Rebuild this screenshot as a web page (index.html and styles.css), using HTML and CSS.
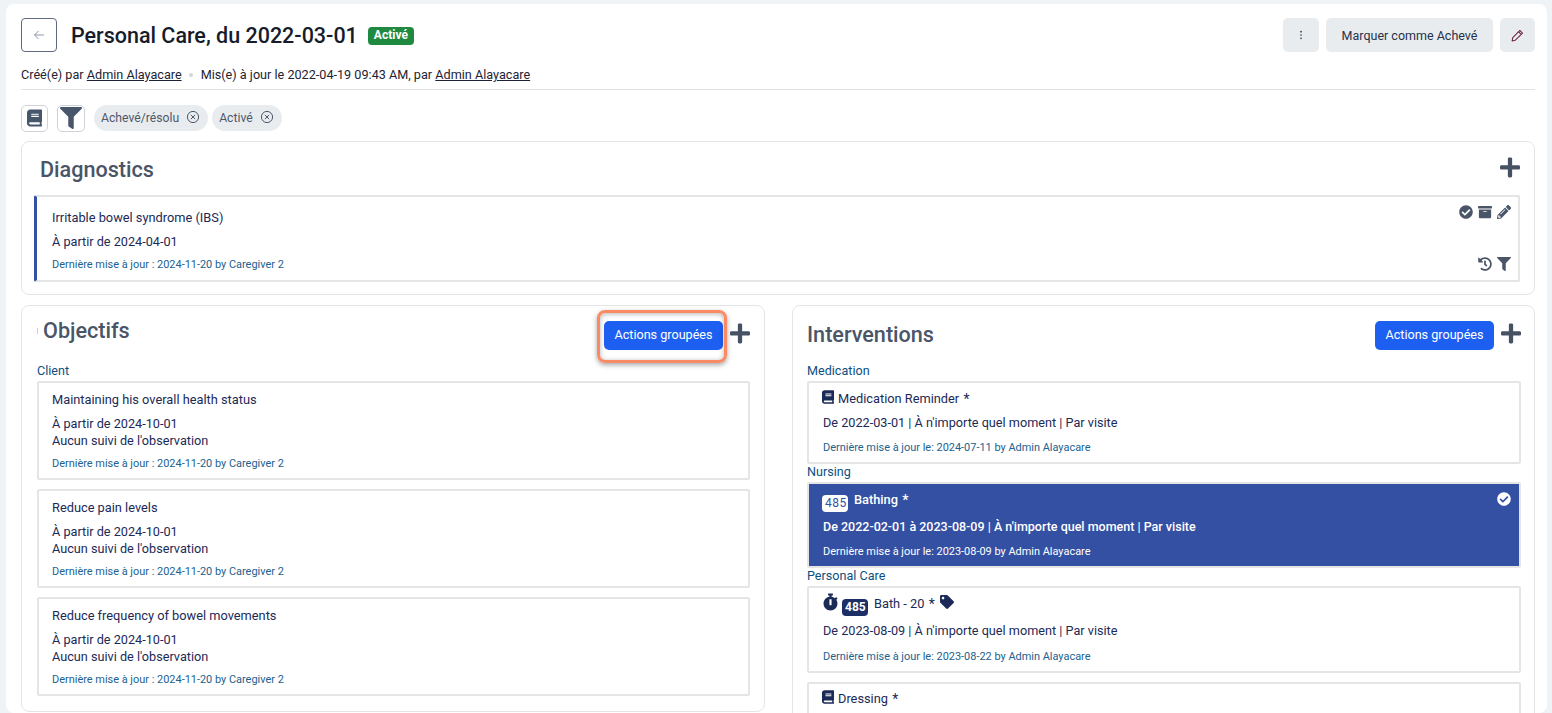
FILE: index.html
```html
<!DOCTYPE html>
<html lang="fr">
<head>
<meta charset="utf-8">
<title>Personal Care</title>
<link rel="stylesheet" href="styles.css">
</head>
<body>
<svg class="sprite" aria-hidden="true">
  <symbol id="i-book" viewBox="0 0 448 512"><path d="M448 360V24c0-13.3-10.7-24-24-24H96C43 0 0 43 0 96v320c0 53 43 96 96 96h328c13.3 0 24-10.7 24-24v-16c0-7.5-3.5-14.3-8.9-18.7-4.2-15.4-4.2-59.3 0-74.7 5.4-4.3 8.9-11.1 8.9-18.6zM128 134c0-3.3 2.7-6 6-6h212c3.3 0 6 2.7 6 6v20c0 3.3-2.7 6-6 6H134c-3.3 0-6-2.7-6-6v-20zm0 64c0-3.3 2.7-6 6-6h212c3.3 0 6 2.7 6 6v20c0 3.3-2.7 6-6 6H134c-3.3 0-6-2.7-6-6v-20zm253.4 250H96c-17.7 0-32-14.3-32-32 0-17.6 14.4-32 32-32h285.4c-1.9 17.1-1.9 46.9 0 64z"/></symbol>
  <symbol id="i-filter" viewBox="0 0 512 512"><path d="M487.976 0H24.028C2.71 0-8.047 25.866 7.058 40.971L192 225.941V432c0 7.831 3.821 15.17 10.237 19.662l80 55.98C298.02 518.69 320 507.493 320 487.98V225.941l184.947-184.97C520.021 25.896 509.338 0 487.976 0z"/></symbol>
  <symbol id="i-check" viewBox="0 0 512 512"><path d="M504 256c0 136.967-111.033 248-248 248S8 392.967 8 256 119.033 8 256 8s248 111.033 248 248zM227.314 387.314l184-184c6.248-6.248 6.248-16.379 0-22.627l-22.627-22.627c-6.248-6.249-16.379-6.249-22.628 0L216 308.118l-70.059-70.059c-6.248-6.248-16.379-6.248-22.628 0l-22.627 22.627c-6.248 6.248-6.248 16.379 0 22.627l104 104c6.249 6.249 16.379 6.249 22.628.001z"/></symbol>
  <symbol id="i-archive" viewBox="0 0 512 512"><path d="M32 448c0 17.7 14.3 32 32 32h384c17.7 0 32-14.3 32-32V160H32v288zm160-212c0-6.6 5.4-12 12-12h104c6.6 0 12 5.4 12 12v8c0 6.6-5.4 12-12 12H204c-6.6 0-12-5.4-12-12v-8zM480 32H32C14.3 32 0 46.3 0 64v48c0 8.8 7.2 16 16 16h480c8.8 0 16-7.2 16-16V64c0-17.7-14.3-32-32-32z"/></symbol>
  <symbol id="i-pencil" viewBox="0 0 512 512"><path d="M497.9 142.1l-46.1 46.1c-4.7 4.7-12.3 4.7-17 0l-111-111c-4.7-4.7-4.7-12.3 0-17l46.1-46.1c18.7-18.7 49.1-18.7 67.9 0l60.1 60.1c18.8 18.7 18.8 49.1 0 67.9zM284.2 99.8L21.6 362.4.4 483.9c-2.9 16.4 11.4 30.6 27.8 27.8l121.5-21.3 262.6-262.6c4.7-4.7 4.7-12.3 0-17l-111-111c-4.8-4.7-12.4-4.7-17.1 0zM124.1 339.9c-5.5-5.5-5.5-14.3 0-19.8l154-154c5.5-5.5 14.3-5.5 19.8 0s5.5 14.3 0 19.8l-154 154c-5.5 5.5-14.3 5.5-19.8 0zM88 424h48v36.3l-64.5 11.3-31.1-31.1L51.7 376H88v48z"/></symbol>
  <symbol id="i-history" viewBox="0 0 512 512"><path d="M504 255.531c.253 136.64-111.18 248.372-247.82 248.468-59.015.042-113.223-20.53-155.822-54.911-11.077-8.94-11.905-25.541-1.839-35.607l11.267-11.267c8.609-8.609 22.353-9.551 31.891-1.984C173.062 425.135 212.781 440 256 440c101.705 0 184-82.311 184-184 0-101.705-82.311-184-184-184-48.814 0-93.149 18.969-126.068 49.932l50.754 50.754c10.08 10.08 2.941 27.314-11.313 27.314H24c-8.837 0-16-7.163-16-16V38.627c0-14.254 17.234-21.393 27.314-11.314l49.372 49.372C129.209 34.136 189.552 8 256 8c136.81 0 247.747 110.78 248 247.531zm-180.912 78.784l9.823-12.63c8.138-10.463 6.253-25.542-4.21-33.679L288 256.349V152c0-13.255-10.745-24-24-24h-16c-13.255 0-24 10.745-24 24v135.651l65.409 50.874c10.463 8.137 25.541 6.253 33.679-4.21z"/></symbol>
  <symbol id="i-plus" viewBox="0 0 448 512"><path d="M416 208H272V64c0-17.67-14.33-32-32-32h-32c-17.67 0-32 14.33-32 32v144H32c-17.67 0-32 14.33-32 32v32c0 17.67 14.33 32 32 32h144v144c0 17.67 14.33 32 32 32h32c17.67 0 32-14.33 32-32V304h144c17.67 0 32-14.33 32-32v-32c0-17.67-14.33-32-32-32z"/></symbol>
  <symbol id="i-stopwatch" viewBox="0 0 448 512"><path d="M432 304c0 114.9-93.1 208-208 208S16 418.9 16 304c0-104 76.3-190.2 176-205.5V64h-28c-6.6 0-12-5.4-12-12V12c0-6.6 5.4-12 12-12h120c6.6 0 12 5.4 12 12v40c0 6.6-5.4 12-12 12h-28v34.5c37.5 5.8 71.7 21.6 99.7 44.6l27.5-27.5c4.7-4.7 12.3-4.7 17 0l28.3 28.3c4.7 4.7 4.7 12.3 0 17l-29.4 29.4-.6.6C419.7 223.3 432 262.2 432 304zm-176 36V188.5c0-6.6-5.4-12-12-12h-40c-6.6 0-12 5.4-12 12V340c0 6.6 5.4 12 12 12h40c6.6 0 12-5.4 12-12z"/></symbol>
  <symbol id="i-tag" viewBox="0 0 512 512"><path d="M0 252.118V48C0 21.49 21.49 0 48 0h204.118a48 48 0 0 1 33.941 14.059l211.882 211.882c18.745 18.745 18.745 49.137 0 67.882L293.823 497.941c-18.745 18.745-49.137 18.745-67.882 0L14.059 286.059A48 48 0 0 1 0 252.118zM112 64c-26.51 0-48 21.49-48 48s21.49 48 48 48 48-21.49 48-48-21.49-48-48-48z"/></symbol>
  <symbol id="i-x" viewBox="0 0 16 16"><circle cx="8" cy="8" r="5.6" fill="none" stroke="currentColor" stroke-width="1"/><path d="M5.9 5.9l4.2 4.2M10.1 5.9l-4.2 4.2" fill="none" stroke="currentColor" stroke-width="1"/></symbol>
</svg>

<div class="page">
  <header class="top">
    <div class="top-left">
      <button class="back" type="button" aria-label="Retour">
        <svg class="back-icon" viewBox="0 0 12 12"><path d="M11 6H1.5M5.5 2L1.5 6l4 4" fill="none" stroke="currentColor" stroke-width="1"/></svg>
      </button>
      <h1 class="page-title">Personal Care, du 2022-03-01</h1>
      <span class="status">Activé</span>
    </div>
    <div class="top-right">
      <button class="grey-btn kebab" type="button" aria-label="Plus">
        <svg class="kebab-icon" viewBox="0 0 4 12"><circle cx="2" cy="2" r="1"/><circle cx="2" cy="6" r="1"/><circle cx="2" cy="10" r="1"/></svg>
      </button>
      <button class="grey-btn mark" type="button">Marquer comme Achevé</button>
      <button class="grey-btn edit" type="button" aria-label="Modifier">
        <svg class="edit-icon" viewBox="0 0 14 14"><path d="M9.6 1.6l2.8 2.8-7.7 7.7-3.5.7.7-3.5zM8.2 3l2.8 2.8" fill="none" stroke="currentColor" stroke-width="1.1" stroke-linejoin="round"/></svg>
      </button>
    </div>
  </header>

  <p class="meta">Créé(e) par <a href="#">Admin Alayacare</a><span class="dot"></span>Mis(e) à jour le 2022-04-19 09:43 AM, par <a href="#">Admin Alayacare</a></p>

  <div class="filters">
    <button class="square" type="button" aria-label="Livre"><svg class="square-book"><use href="#i-book"/></svg></button>
    <button class="square second" type="button" aria-label="Filtre"><svg class="square-filter"><use href="#i-filter"/></svg></button>
    <span class="chip">Achevé/résolu<svg class="chip-x"><use href="#i-x"/></svg></span>
    <span class="chip">Activé<svg class="chip-x"><use href="#i-x"/></svg></span>
  </div>

  <section class="panel diag-panel">
    <div class="panel-head diag-head">
      <h2 class="panel-title diag-title">Diagnostics</h2>
      <svg class="plus diag-plus"><use href="#i-plus"/></svg>
    </div>
    <article class="card diag-card">
      <div>
        <div class="card-title">Irritable bowel syndrome (IBS)</div>
        <div class="line diag-date">À partir de 2024-04-01</div>
        <div class="updated diag-updated">Dernière mise à jour : 2024-11-20 by Caregiver 2</div>
      </div>
      <div class="diag-actions">
        <div class="action-row">
          <svg class="act"><use href="#i-check"/></svg>
          <svg class="act"><use href="#i-archive"/></svg>
          <svg class="act"><use href="#i-pencil"/></svg>
        </div>
        <div class="action-row">
          <svg class="act"><use href="#i-history"/></svg>
          <svg class="act"><use href="#i-filter"/></svg>
        </div>
      </div>
    </article>
  </section>

  <div class="columns">
    <section class="panel obj-panel">
      <div class="panel-head obj-head">
        <h2 class="panel-title obj-title"><span class="sliver"></span>Objectifs</h2>
        <div class="head-actions">
          <span class="highlight"><button class="blue-btn" type="button">Actions groupées</button></span>
          <svg class="plus"><use href="#i-plus"/></svg>
        </div>
      </div>
      <div class="group-label">Client</div>
      <div class="stack">
        <article class="card obj-card">
          <div class="card-title">Maintaining his overall health status</div>
          <div class="line obj-date">À partir de 2024-10-01</div>
          <div class="line">Aucun suivi de l'observation</div>
          <div class="updated obj-updated">Dernière mise à jour : 2024-11-20 by Caregiver 2</div>
        </article>
        <article class="card obj-card">
          <div class="card-title">Reduce pain levels</div>
          <div class="line obj-date">À partir de 2024-10-01</div>
          <div class="line">Aucun suivi de l'observation</div>
          <div class="updated obj-updated">Dernière mise à jour : 2024-11-20 by Caregiver 2</div>
        </article>
        <article class="card obj-card">
          <div class="card-title">Reduce frequency of bowel movements</div>
          <div class="line obj-date">À partir de 2024-10-01</div>
          <div class="line">Aucun suivi de l'observation</div>
          <div class="updated obj-updated">Dernière mise à jour : 2024-11-20 by Caregiver 2</div>
        </article>
      </div>
    </section>

    <section class="panel int-panel">
      <div class="panel-head int-head">
        <h2 class="panel-title">Interventions</h2>
        <div class="head-actions">
          <button class="blue-btn" type="button">Actions groupées</button>
          <svg class="plus"><use href="#i-plus"/></svg>
        </div>
      </div>
      <div class="group-label">Medication</div>
      <article class="card int-card">
        <div class="card-title int-title"><svg class="int-book"><use href="#i-book"/></svg>Medication Reminder <span class="star">*</span></div>
        <div class="line int-line">De 2022-03-01 | À n'importe quel moment | Par visite</div>
        <div class="updated int-updated">Dernière mise à jour le: 2024-07-11 by Admin Alayacare</div>
      </article>
      <div class="group-label">Nursing</div>
      <article class="card int-card selected">
        <svg class="selected-check"><use href="#i-check"/></svg>
        <div class="card-title int-title"><span class="badge badge-light">485</span>Bathing <span class="star">*</span></div>
        <div class="line int-line">De 2022-02-01 à 2023-08-09 | À n'importe quel moment | Par visite</div>
        <div class="updated int-updated">Dernière mise à jour le: 2023-08-09 by Admin Alayacare</div>
      </article>
      <div class="group-label">Personal Care</div>
      <div class="stack">
        <article class="card int-card badged">
          <div class="card-title int-title"><svg class="int-watch"><use href="#i-stopwatch"/></svg><span class="badge badge-dark">485</span>Bath - 20 <span class="star">*</span><svg class="int-tag"><use href="#i-tag"/></svg></div>
          <div class="line int-line">De 2023-08-09 | À n'importe quel moment | Par visite</div>
          <div class="updated int-updated">Dernière mise à jour le: 2023-08-22 by Admin Alayacare</div>
        </article>
        <article class="card int-card int-short">
          <div class="card-title int-title"><svg class="int-book"><use href="#i-book"/></svg>Dressing <span class="star">*</span></div>
        </article>
      </div>
    </section>
  </div>
</div>
</body>
</html>
```

FILE: styles.css
```css
* { box-sizing: border-box; }
html, body { height: 713px; overflow: hidden; }
body {
  margin: 0;
  padding: 4px 5px 0 6px;
  background: #eff3f6;
  font-family: Roboto, "Liberation Sans", sans-serif;
  font-size: 13px;
  color: #1a2233;
}
.sprite { display: none; }
svg { fill: currentColor; flex: none; }
button { font-family: inherit; padding: 0; cursor: pointer; }

.page {
  background: #fff;
  border-radius: 8px;
  padding: 14px 12px 0 15px;
  height: 709px;
  overflow: hidden;
}

/* header */
.top { display: flex; justify-content: space-between; align-items: center; height: 34px; }
.top-left { display: flex; align-items: center; }
.back {
  width: 36px; height: 34px;
  border: 1px solid #5f6b80;
  border-radius: 4px;
  background: #fff;
  color: #8d97a8;
  display: flex; align-items: center; justify-content: center;
}
.back-icon { width: 12px; height: 12px; }
.page-title { margin: 2px 0 0 14px; font-size: 21.5px; font-weight: 500; line-height: 34px; color: #171c2b; }
.status {
  margin: 2px 0 0 10px;
  height: 18px; line-height: 17px;
  padding: 0 6px;
  background: #1f8a3f;
  border-radius: 4px;
  color: #fff;
  font-size: 12px; font-weight: 700;
}
.top-right { display: flex; gap: 7px; }
.grey-btn {
  height: 34px;
  border: 0;
  border-radius: 5px;
  background: #e9ecef;
  color: #27324a;
  font-size: 12.5px;
  display: flex; align-items: center; justify-content: center;
}
.kebab { width: 36px; }
.kebab-icon { width: 4px; height: 10px; }
.mark { width: 167px; }
.edit { width: 35px; color: #6b2440; }
.edit-icon { width: 13px; height: 13px; }

.meta {
  margin: 15px 0 0;
  padding-bottom: 7px;
  line-height: 15px;
  font-size: 12.65px;
  color: #1d2333;
  border-bottom: 1px solid #dfe2e6;
}
.meta a { color: inherit; }
.dot {
  display: inline-block;
  width: 4px; height: 4px;
  border-radius: 50%;
  background: #d3d7dc;
  margin: 0 8px 2px 7px;
  vertical-align: middle;
}

.filters { display: flex; align-items: center; margin-top: 14px; height: 28px; }
.square {
  width: 27px; height: 27px;
  border: 1px solid #cfd3d9;
  border-radius: 5px;
  background: #fff;
  color: #48566c;
  display: flex; align-items: center; justify-content: center;
}
.second { width: 28px; margin-left: 9px; }
.square-book { width: 15px; height: 18px; }
.square-filter { width: 22px; height: 22px; }
.chip {
  height: 26px;
  margin-left: 9px;
  padding: 0 7px;
  border-radius: 13px;
  background: #e9ecef;
  color: #4d586b;
  font-size: 12.2px;
  display: flex; align-items: center;
}
.chip + .chip { margin-left: 4px; }
.chip-x { width: 16px; height: 16px; margin: -2px 0 0 6px; color: #4d586b; }

/* panels */
.panel { border: 1px solid #e3e5e8; border-radius: 8px; background: #fff; }
.diag-panel { margin-top: 9px; padding: 0 14px 12px 12px; }
.panel-head { display: flex; justify-content: space-between; align-items: center; }
.diag-head { height: 53px; padding: 0 0 0 6px; }
.diag-title { padding-top: 2px; }
.diag-plus { margin-top: -2px; }
.panel-title { margin: 0; font-size: 21.6px; font-weight: 500; color: #4a5568; line-height: 28px; }
.plus { width: 20px; height: 22.86px; color: #465264; display: block; }

.card { border: 2px solid #e5e5e5; border-radius: 2px; background: #fff; color: #1b2a57; position: relative; }
.card-title { font-size: 12.8px; line-height: 18px; }
.line { font-size: 12.68px; line-height: 17px; }
.updated { font-size: 10.95px; line-height: 16px; color: #22618f; }

.diag-card {
  border-left: 3px solid #3450a3;
  height: 87px;
  padding: 12px 7px 6px 15px;
  display: flex; justify-content: space-between;
}
.diag-date { margin-top: 6px; }
.diag-updated { margin-top: 7px; }
.diag-actions { display: flex; flex-direction: column; justify-content: space-between; align-items: flex-end; padding: 0 0 3px; margin-top: -4px; }
.action-row { display: flex; gap: 5px; }
.act { width: 14px; height: 14px; color: #4a5568; }

.columns { display: grid; grid-template-columns: 744px 743px; column-gap: 27px; margin-top: 10px; align-items: start; }
.obj-panel { padding: 0 14px 15px 15px; }
.int-panel { padding: 0 13px 15px 14px; }
.obj-head { height: 57px; align-items: flex-start; }
.int-head { height: 57px; align-items: flex-start; }
.obj-title { padding-top: 11px; display: flex; align-items: center; }
.int-head .panel-title { padding-top: 15px; }
.sliver { width: 1px; height: 6px; background: #d9cfc4; margin-right: 5px; }
.head-actions { display: flex; align-items: flex-start; padding-top: 15px; gap: 7px; }
.head-actions .plus { margin-top: 1px; }

.highlight { position: relative; display: block; }
.highlight::after {
  content: "";
  position: absolute;
  left: -7px; right: -4px; top: -11px; bottom: -13px;
  border: 3px solid #f98a63;
  border-radius: 8px;
  box-shadow: 0 2px 5px rgba(0,0,0,.35), inset 0 1px 5px rgba(0,0,0,.3);
  pointer-events: none;
}
.blue-btn {
  display: block;
  width: 119px; height: 29px;
  border: 0;
  border-radius: 5px;
  background: #1d5ff0;
  color: #fff;
  font-size: 12.6px;
  padding-bottom: 2px;
}

.group-label { font-size: 12.6px; line-height: 15px; color: #0d4f80; margin-bottom: 3px; }
.stack { display: flex; flex-direction: column; gap: 9px; }

.obj-card { height: 99px; padding: 8px 13px 6px 13px; }
.obj-date { margin-top: 6px; }
.obj-updated { margin-top: 7px; }

.int-card { min-height: 83px; padding: 7px 14px 6px 14px; }
.int-title { display: flex; align-items: center; white-space: pre; }
.int-line { margin-top: 6px; }
.int-updated { margin-top: 9px; }
.star { margin-left: 1px; font-size: 14px; }
.int-book { width: 12px; height: 14px; margin: -2px 4px 2px -1px; }
.int-watch { width: 15px; height: 18px; margin: -2px 4px 2px 0; }
.int-tag { width: 14px; height: 14px; margin: -2px 0 2px 5px; }
.int-short { padding-top: 6px; }

.badge {
  height: 17px; line-height: 17px;
  padding: 0 3px;
  border-radius: 4px;
  font-size: 12px;
  margin: 3px 6px -3px 0;
  width: 26px;
  text-align: center;
}
.badge-light { background: #fff; color: #3450a3; margin-left: -1px; font-weight: 400; letter-spacing: .5px; }
.badge-dark { background: #1c2f66; color: #fff; font-weight: 700; }

.badged { padding: 7px 14px 6px 14px; }
.badged .int-line { margin-top: 9px; }
.badged .int-updated { margin-top: 10px; }

.selected {
  background: #3450a3;
  color: #fff;
  min-height: 85px;
  margin-top: 1px;
  padding: 7px 14px 6px 14px;
}
.selected .card-title { font-weight: 500; }
.selected .line { font-weight: 500; font-size: 12.5px; margin-top: 9px; }
.selected .updated { color: #fff; }
.selected-check { position: absolute; right: 8px; top: 8px; width: 14px; height: 14px; color: #fff; }
```
